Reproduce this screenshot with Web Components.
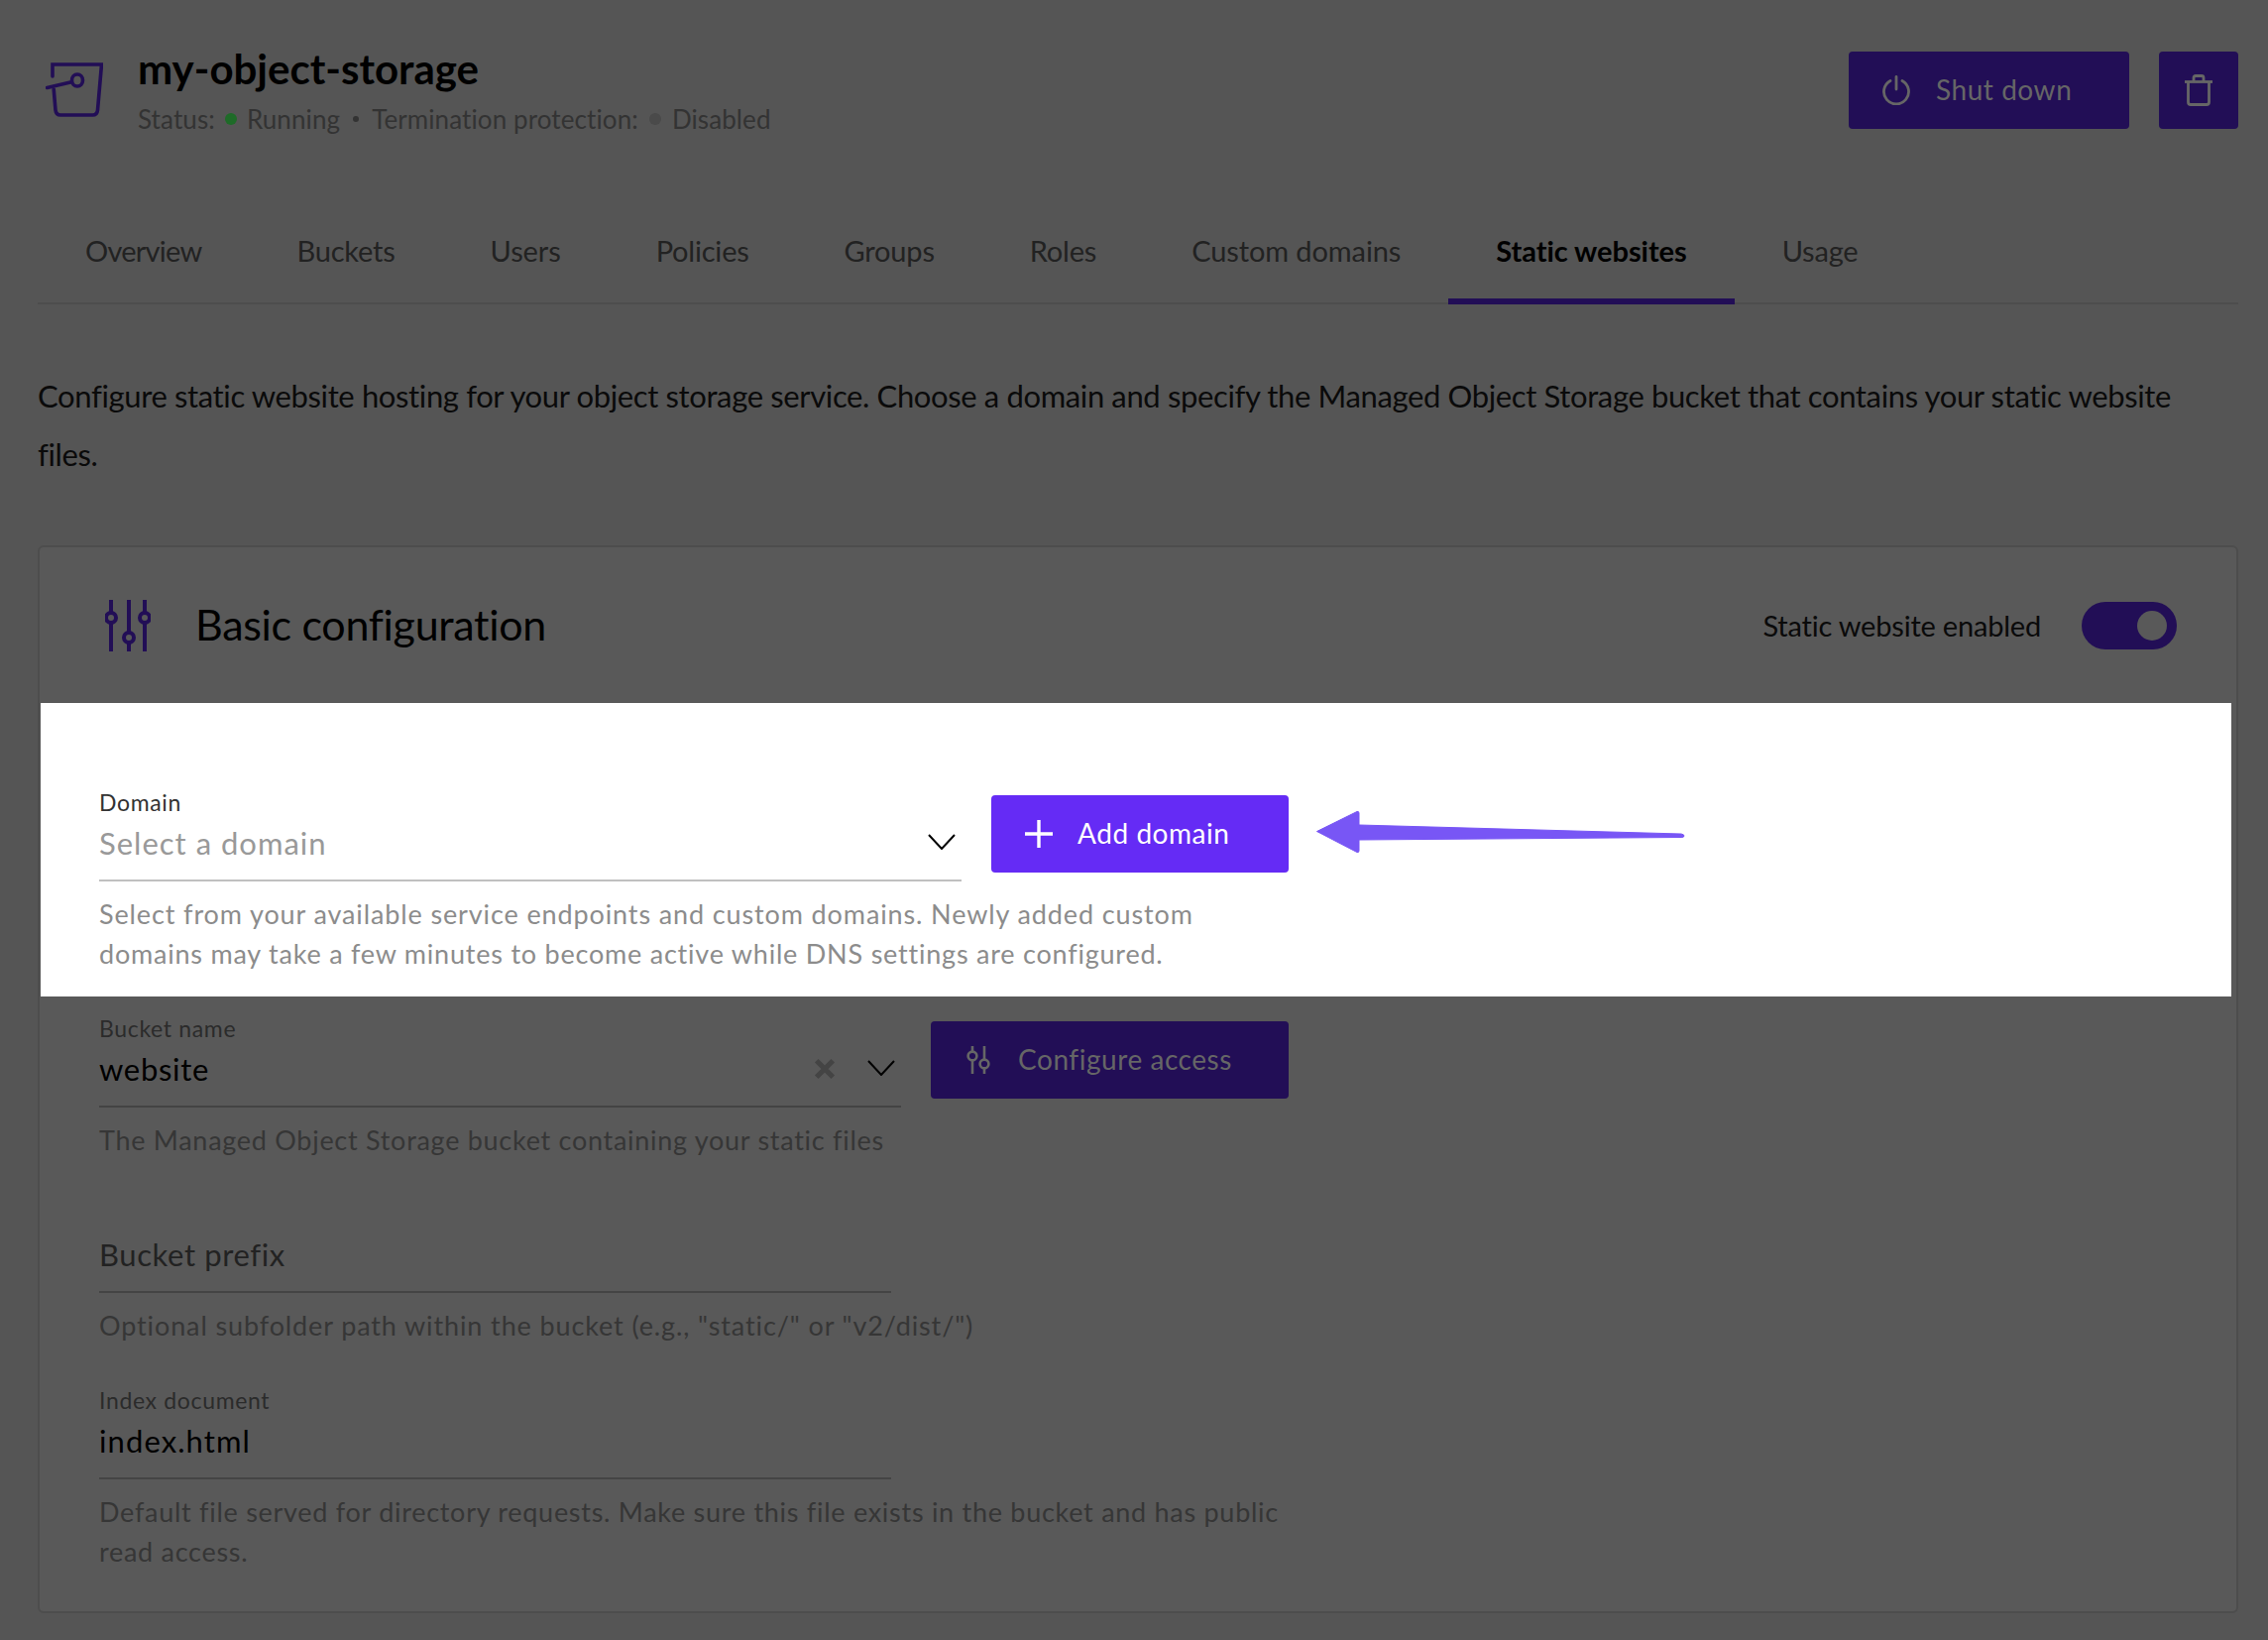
<!DOCTYPE html>
<html><head><meta charset="utf-8"><title>my-object-storage</title>
<style>
html,body{margin:0;padding:0;background:#555;}
body{font-family:"Lato","Liberation Sans",sans-serif;color:#000;}
</style></head><body>
<storage-page>
  <page-header title="my-object-storage"></page-header>
  <tab-bar>
    <tab-item style="letter-spacing:-.75px">Overview</tab-item><tab-item>Buckets</tab-item><tab-item style="letter-spacing:-.1px">Users</tab-item><tab-item>Policies</tab-item><tab-item>Groups</tab-item><tab-item>Roles</tab-item><tab-item style="letter-spacing:-.1px">Custom domains</tab-item><tab-item active>Static websites</tab-item><tab-item>Usage</tab-item>
  </tab-bar>
  <intro-text>Configure static website hosting for your object storage service. Choose a domain and specify the Managed Object Storage bucket that contains your static website<br>files.</intro-text>
  <config-card heading="Basic configuration">
    <spotlight-section>
      <form-row>
        <form-field lit style="--vs:1px" label="Domain" placeholder="Select a domain" width="870" chevron>Select from your available service endpoints and custom domains. Newly added custom<br><span style="letter-spacing:.78px">domains may take a few minutes to become active while DNS settings are configured.</span></form-field>
        <ui-button lit icon="plus" width="300" pad="34" gap="25">Add domain</ui-button>
      </form-row>
      <callout-arrow></callout-arrow>
    </spotlight-section>
    <dim-section>
      <form-row>
        <form-field style="--vs:.7px;--hs:.72px" label="Bucket name" value="website" width="809" chevron clear>The Managed Object Storage bucket containing your static files</form-field>
        <ui-button icon="sliders" width="361" pad="36" gap="28">Configure access</ui-button>
      </form-row>
      <form-field class="gap" style="--vs:.6px" label="" placeholder="Bucket prefix" width="799">Optional subfolder path within the bucket (e.g., "static/" or "v2/dist/")</form-field>
      <form-field class="gap2" style="--vs:1.1px;--hs:.72px" label="Index document" value="index.html" width="799">Default file served for directory requests. Make sure this file exists in the bucket and has public<br>read access.</form-field>
    </dim-section>
  </config-card>
</storage-page>
<script>
const ICONS={
 bucket:{vb:'0 0 58 55',w:58,h:55,s:'<g fill="none" stroke="currentColor" stroke-width="3.6" stroke-linecap="round"><path d="M7 14V2H56.5L52.5 48Q52 53 47.5 53H15Q10.5 53 10 48L8.2 27"/><path d="M1.5 25.5L25 20"/><ellipse cx="32" cy="18" rx="5.5" ry="6"/></g>'},
 sliders:{vb:'0 0 24 28',w:24,h:28,s:'<g fill="none" stroke="currentColor" stroke-width="2.6"><path d="M6 0V5M6 15V28M18 0V13M18 23V28"/><circle cx="6" cy="10" r="4.4"/><circle cx="18" cy="18" r="4.4"/></g>'},
 sliders3:{vb:'0 0 46 52',w:46,h:52,s:'<g fill="none" stroke="currentColor" stroke-width="4"><path d="M6 0V12M6 24V52M24 0V33M24 43V52M40 0V12M40 24V52"/><circle cx="6" cy="18" r="5"/><circle cx="24" cy="38" r="5"/><circle cx="40" cy="18" r="5"/></g>'},
 power:{vb:'0 0 28 30',w:28,h:30,s:'<g fill="none" stroke="currentColor" stroke-width="2.8" stroke-linecap="round"><path d="M14 1.5V14"/><path d="M8 5.5A12.5 12.5 0 1 0 20 5.5"/></g>'},
 trash:{vb:'0 0 28 32',w:28,h:32,s:'<g fill="none" stroke="currentColor" stroke-width="2.8" stroke-linejoin="round"><path d="M0 7.5H28"/><path d="M9 7.5V3.5Q9 1.5 11 1.5H17Q19 1.5 19 3.5V7.5"/><path d="M3.5 7.5V28Q3.5 30.5 6 30.5H22Q24.5 30.5 24.5 28V7.5"/></g>'},
 plus:{vb:'0 0 28 28',w:28,h:28,s:'<path d="M14 0V28M0 14H28" fill="none" stroke="currentColor" stroke-width="3.4"/>'},
 chevron:{vb:'0 0 28 16',w:28,h:16,s:'<path d="M1 1L14 15L27 1" fill="none" stroke="currentColor" stroke-width="2"/>'},
 clear:{vb:'0 0 20 20',w:22,h:22,s:'<path d="M2.5 2.5L17.5 17.5M17.5 2.5L2.5 17.5" fill="none" stroke="currentColor" stroke-width="4.6"/>'}
};
function def(tag,css,html,init){
  customElements.define(tag,class extends HTMLElement{
    constructor(){super();this.attachShadow({mode:'open'});}
    connectedCallback(){
      const h=typeof html==='function'?html(this):html;
      this.shadowRoot.innerHTML='<style>'+css+'</style>'+h;
      if(init)init(this);
    }
  });
}
def('ui-icon',':host{display:inline-flex;flex:none}svg{display:block}',el=>{
  const i=ICONS[el.getAttribute('name')];
  return `<svg width="${i.w}" height="${i.h}" viewBox="${i.vb}" aria-hidden="true">${i.s}</svg>`;
});
def('storage-page',':host{display:block;padding:0 30px 28px 38px}','<slot></slot>');
def('page-header',`
 :host{display:flex;align-items:flex-start;height:201px;box-sizing:border-box;padding-top:52px}
 .ic{margin:11px 0 0 8px;color:#220e56}
 .txt{margin-left:35px;flex:1}
 h1{margin:-8px 0 0;font-size:42px;line-height:50px;font-weight:700;color:#000;letter-spacing:0}
 .st{display:flex;align-items:center;margin-top:10px;font-size:26px;line-height:32px;color:#333;white-space:nowrap;letter-spacing:.1px}
 .d{width:12px;height:12px;border-radius:50%;margin:0 11px;flex:none}
 .g{background:#1e6b28;margin:0 10px}.o{background:#4a4a4a}
 .s{width:6px;height:6px;border-radius:50%;background:#333;margin:0 13px;flex:none}
 .acts{display:flex;gap:30px}
`,el=>`<ui-icon class="ic" name="bucket"></ui-icon>
 <div class="txt"><h1>${el.getAttribute('title')}</h1>
 <div class="st"><span>Status:</span><i class="d g"></i><span>Running</span><i class="s"></i><span>Termination protection:</span><i class="d o"></i><span>Disabled</span></div></div>
 <div class="acts"><ui-button icon="power" width="283" pad="34" gap="26">Shut down</ui-button><ui-button icon="trash" width="80" pad="26" gap="0"></ui-button></div>`);
def('ui-button',`
 :host{display:inline-flex;align-items:center;height:78px;box-sizing:border-box;border-radius:4px;flex:none;background:#220e56;color:#666;font-size:28px;letter-spacing:.55px;white-space:nowrap}
 :host([lit]){background:#652bf5;color:#fff}
 span{margin-bottom:2px}
`,el=>`<ui-icon name="${el.getAttribute('icon')}"></ui-icon><span style="margin-left:${el.getAttribute('gap')}px"><slot></slot></span>`,
 el=>{el.style.width=el.getAttribute('width')+'px';el.style.paddingLeft=el.getAttribute('pad')+'px';});
def('tab-bar',':host{display:flex;height:106px;box-shadow:inset 0 -2px #4d4d4d}','<slot></slot>');
def('tab-item',`
 :host{display:flex;align-items:center;height:106px;box-sizing:border-box;padding:0 48px 3px;border-bottom:6px solid transparent;border-top:6px solid transparent;font-size:29px;color:#222;white-space:nowrap;letter-spacing:-.2px}
 :host([active]){font-weight:700;color:#000;border-bottom-color:#220e56;letter-spacing:-.05px}
`,'<slot></slot>');
def('intro-text',':host{display:block;margin:63px 0 62px;font-size:31px;line-height:59px;color:#0a0a0a;white-space:nowrap;letter-spacing:-.37px}','<slot></slot>');
def('config-card',`
 :host{display:block;border:2px solid #4d4d4d;border-radius:6px;background:#595959}
 header{display:flex;align-items:center;height:157px;box-sizing:border-box;padding:0 60px 0 66px}
 .ic{color:#220e56;margin-right:45px}
 h2{margin:0 0 2px;flex:1;font-size:43px;font-weight:400;color:#000;letter-spacing:-.3px}
 .t{font-size:29px;color:#0a0a0a;margin-right:41px;letter-spacing:-.2px}
`,el=>`<header><ui-icon class="ic" name="sliders3"></ui-icon><h2>${el.getAttribute('heading')}</h2><span class="t">Static website enabled</span><toggle-switch></toggle-switch></header><slot></slot>`);
def('toggle-switch',`
 :host{display:block;width:96px;height:48px;border-radius:24px;background:#220e56;position:relative;flex:none}
 i{position:absolute;left:56px;top:9px;width:30px;height:30px;border-radius:50%;background:#595959}
`,'<i></i>');
def('spotlight-section',`
 :host{display:block;position:relative;box-sizing:border-box;height:296px;margin:0 5px 0 1px;padding:82px 0 0 59px;background:#fff;border-top:3px solid;border-image:linear-gradient(#fff 33%,#dfdfdf 33%) 1}
`,'<slot></slot>');
def('dim-section',':host{display:block;padding:17px 0 40px 60px}','<slot></slot>');
def('form-row',':host{display:flex;align-items:flex-start;gap:30px}::slotted(ui-button){margin-top:8px}','<slot></slot>');
def('form-field',`
 :host{display:block;flex:none;--l:#2b2b2b;--v:#000;--p:#222;--h:#363636;--b:#444;--c:#000;--x:#444}
 :host([lit]){--l:#333;--p:#999;--h:#8c8c8c;--b:#c0c0c0}
 :host(.gap){margin-top:39px}:host(.gap2){margin-top:40px}
 .lb{height:30px;font-size:23px;line-height:30px;color:var(--l);letter-spacing:.66px}
 .row{display:flex;align-items:center;height:52px;padding-bottom:11px;border-bottom:2px solid var(--b);font-size:31px}
 .val{flex:1;color:var(--v);letter-spacing:var(--vs,.8px)}.val.ph{color:var(--p)}
 .x{color:var(--x);margin-right:32px;margin-bottom:1px}
 .ch{color:var(--c);margin:0 6px 2px 0}
 .help{margin-top:13px;font-size:27px;line-height:40px;color:var(--h);white-space:nowrap;letter-spacing:var(--hs,.88px)}
`,el=>{
 const v=el.getAttribute('value'),p=el.getAttribute('placeholder');
 return `<div class="lb">${el.getAttribute('label')||''}</div>
 <div class="row"><span class="val ${v?'':'ph'}">${v||p}</span>${el.hasAttribute('clear')?'<ui-icon class="x" name="clear"></ui-icon>':''}${el.hasAttribute('chevron')?'<ui-icon class="ch" name="chevron"></ui-icon>':''}</div>
 <div class="help"><slot></slot></div>`;
},el=>{el.style.width=el.getAttribute('width')+'px';});
def('callout-arrow',':host{position:absolute;left:1286px;top:105px;display:block}svg{display:block}',
 `<svg width="373" height="44" viewBox="0 0 373 44"><path d="M1.5 21.5L42 1.5Q44 1 44 3L44 15L369 24Q372 24.5 372 26Q372 27.5 369 27.5L44 30L44 41Q44 43 42 42.5Z" fill="#7856f5" stroke="#7856f5" stroke-width="1" stroke-linejoin="round"/></svg>`);
</script>
</body></html>
